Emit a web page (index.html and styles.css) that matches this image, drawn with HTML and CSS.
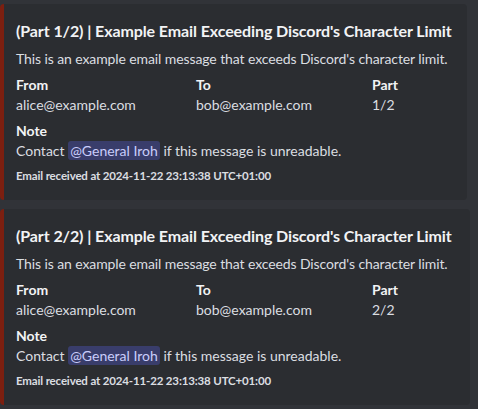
FILE: index.html
```html
<!DOCTYPE html>
<html lang="en">
<head>
<meta charset="utf-8">
<title>Embeds</title>
<link rel="stylesheet" href="styles.css">
</head>
<body>
<div class="chat">
  <article class="embed embed-one">
    <h2 class="embed-title">(Part 1/2) | Example Email Exceeding Discord's Character Limit</h2>
    <p class="embed-desc">This is an example email message that exceeds Discord's character limit.</p>
    <div class="fields">
      <div class="field">
        <div class="field-name">From</div>
        <div class="field-value">alice@example.com</div>
      </div>
      <div class="field">
        <div class="field-name">To</div>
        <div class="field-value">bob@example.com</div>
      </div>
      <div class="field">
        <div class="field-name">Part</div>
        <div class="field-value">1/2</div>
      </div>
      <div class="field field-full">
        <div class="field-name">Note</div>
        <div class="field-value">Contact <span class="mention">@General Iroh</span> if this message is unreadable.</div>
      </div>
    </div>
    <footer class="embed-footer">Email received at 2024-11-22 23:13:38 UTC+01:00</footer>
  </article>
  <article class="embed embed-two">
    <h2 class="embed-title">(Part 2/2) | Example Email Exceeding Discord's Character Limit</h2>
    <p class="embed-desc">This is an example email message that exceeds Discord's character limit.</p>
    <div class="fields">
      <div class="field">
        <div class="field-name">From</div>
        <div class="field-value">alice@example.com</div>
      </div>
      <div class="field">
        <div class="field-name">To</div>
        <div class="field-value">bob@example.com</div>
      </div>
      <div class="field">
        <div class="field-name">Part</div>
        <div class="field-value">2/2</div>
      </div>
      <div class="field field-full">
        <div class="field-name">Note</div>
        <div class="field-value">Contact <span class="mention">@General Iroh</span> if this message is unreadable.</div>
      </div>
    </div>
    <footer class="embed-footer">Email received at 2024-11-22 23:13:38 UTC+01:00</footer>
  </article>
</div>
</body>
</html>
```

FILE: styles.css
```css
html, body {
  margin: 0;
  padding: 0;
  background: #313338;
}

body {
  font-family: Lato, "Liberation Sans", sans-serif;
  color: #dbdee1;
}

.chat {
  display: flex;
  flex-direction: column;
  gap: 9px;
  padding-top: 4px;
}

.embed {
  box-sizing: border-box;
  background: #2b2d31;
  border-left: 4px solid #7c1f10;
  border-radius: 4px;
  padding: 8px 16px 16px 12px;
  display: flex;
  flex-direction: column;
}

.embed-one { width: 467px; }
.embed-two { width: 470px; }

.embed-title {
  margin: 8px 0 0;
  font-size: 16px;
  line-height: 22px;
  font-weight: 700;
  letter-spacing: -0.1px;
  color: #f2f3f5;
  white-space: nowrap;
}

.embed-desc {
  margin: 8px 0 0;
  font-size: 14px;
  line-height: 18px;
  color: #dbdee1;
  letter-spacing: -0.1px;
  white-space: nowrap;
}

.fields {
  margin-top: 8px;
  display: grid;
  grid-template-columns: 172px 168px 1fr;
  gap: 8px;
}

.field-full {
  grid-column: 1 / -1;
}

.field-name {
  font-size: 14px;
  line-height: 18px;
  font-weight: 700;
  color: #f2f3f5;
  margin-bottom: 2px;
}

.field-value {
  font-size: 14px;
  line-height: 18px;
  color: #dbdee1;
}

.mention {
  background: rgba(88, 101, 242, 0.3);
  color: #c9cdfb;
  border-radius: 3px;
  padding: 1px 2px;
}

.embed-footer {
  margin-top: 8px;
  font-size: 11.5px;
  line-height: 16px;
  font-weight: 700;
  letter-spacing: -0.15px;
  color: #dbdee1;
}
```
